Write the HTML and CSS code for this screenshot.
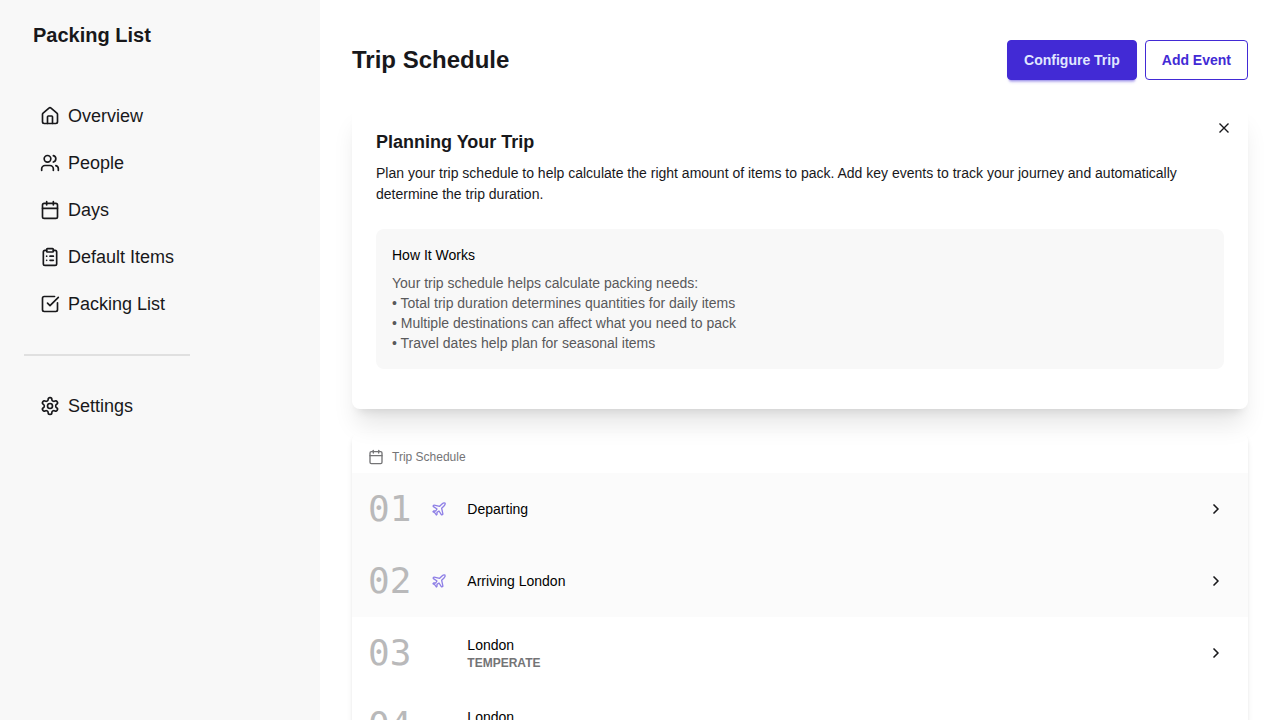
FILE: index.html
```html
<!DOCTYPE html>
<html lang="en">
<head>
<meta charset="utf-8">
<meta name="viewport" content="width=device-width, initial-scale=1">
<title>Packing List</title>
<link rel="stylesheet" href="styles.css">
</head>
<body>
<svg class="sprite" aria-hidden="true">
  <symbol id="house" viewBox="0 0 24 24"><path d="M15 21v-8a1 1 0 0 0-1-1h-4a1 1 0 0 0-1 1v8"/><path d="M3 10a2 2 0 0 1 .709-1.528l7-5.999a2 2 0 0 1 2.582 0l7 5.999A2 2 0 0 1 21 10v9a2 2 0 0 1-2 2H5a2 2 0 0 1-2-2z"/></symbol>
  <symbol id="users" viewBox="0 0 24 24"><path d="M16 21v-2a4 4 0 0 0-4-4H6a4 4 0 0 0-4 4v2"/><circle cx="9" cy="7" r="4"/><path d="M22 21v-2a4 4 0 0 0-3-3.87"/><path d="M16 3.13a4 4 0 0 1 0 7.75"/></symbol>
  <symbol id="calendar" viewBox="0 0 24 24"><path d="M8 2v4"/><path d="M16 2v4"/><rect x="3" y="4" width="18" height="18" rx="2"/><path d="M3 10h18"/></symbol>
  <symbol id="clipboard" viewBox="0 0 24 24"><rect x="8" y="2" width="8" height="4" rx="1"/><path d="M16 4h2a2 2 0 0 1 2 2v14a2 2 0 0 1-2 2H6a2 2 0 0 1-2-2V6a2 2 0 0 1 2-2h2"/><path d="M12 11h4"/><path d="M12 16h4"/><path d="M8 11h.01"/><path d="M8 16h.01"/></symbol>
  <symbol id="check" viewBox="0 0 24 24"><path d="M21 10.5V19a2 2 0 0 1-2 2H5a2 2 0 0 1-2-2V5a2 2 0 0 1 2-2h12.5"/><path d="m9 11 3 3L22 4"/></symbol>
  <symbol id="gear" viewBox="0 0 24 24"><path d="M12.22 2h-.44a2 2 0 0 0-2 2v.18a2 2 0 0 1-1 1.73l-.43.25a2 2 0 0 1-2 0l-.15-.08a2 2 0 0 0-2.73.73l-.22.38a2 2 0 0 0 .73 2.73l.15.1a2 2 0 0 1 1 1.72v.51a2 2 0 0 1-1 1.74l-.15.09a2 2 0 0 0-.73 2.73l.22.38a2 2 0 0 0 2.73.73l.15-.08a2 2 0 0 1 2 0l.43.25a2 2 0 0 1 1 1.73V20a2 2 0 0 0 2 2h.44a2 2 0 0 0 2-2v-.18a2 2 0 0 1 1-1.73l.43-.25a2 2 0 0 1 2 0l.15.08a2 2 0 0 0 2.73-.73l.22-.39a2 2 0 0 0-.73-2.73l-.15-.08a2 2 0 0 1-1-1.74v-.5a2 2 0 0 1 1-1.74l.15-.09a2 2 0 0 0 .73-2.73l-.22-.38a2 2 0 0 0-2.73-.73l-.15.08a2 2 0 0 1-2 0l-.43-.25a2 2 0 0 1-1-1.73V4a2 2 0 0 0-2-2z"/><circle cx="12" cy="12" r="3"/></symbol>
  <symbol id="plane" viewBox="0 0 24 24"><path d="M17.8 19.2 16 11l3.5-3.5C21 6 21.5 4 21 3c-1-.5-3 0-4.5 1.5L13 8 4.8 6.2c-.5-.1-.9.1-1.1.5l-.3.5c-.2.5-.1 1 .3 1.3L9 12l-2 3H4l-1 1 3 2 2 3 1-1v-3l3-2 3.5 5.3c.3.4.8.5 1.3.3l.5-.2c.4-.3.6-.7.5-1.2z"/></symbol>
  <symbol id="chevron" viewBox="0 0 24 24"><path d="m9 18 6-6-6-6"/></symbol>
  <symbol id="close" viewBox="0 0 16 16"><path d="M3.5 3.5l9 9M12.5 3.5l-9 9"/></symbol>
</svg>
<div class="layout">
  <aside class="sidebar">
    <h2 class="brand">Packing List</h2>
    <nav class="nav">
      <ul class="menu">
        <li><a class="menu-link" href="#"><svg class="icon"><use href="#house"/></svg>Overview</a></li>
        <li><a class="menu-link" href="#"><svg class="icon"><use href="#users"/></svg>People</a></li>
        <li><a class="menu-link" href="#"><svg class="icon"><use href="#calendar"/></svg>Days</a></li>
        <li><a class="menu-link" href="#"><svg class="icon"><use href="#clipboard"/></svg>Default Items</a></li>
        <li><a class="menu-link" href="#"><svg class="icon"><use href="#check"/></svg>Packing List</a></li>
      </ul>
      <hr class="divider">
      <a class="menu-link" href="#"><svg class="icon"><use href="#gear"/></svg>Settings</a>
    </nav>
  </aside>
  <main class="main">
    <header class="page-header">
      <h1 class="page-title">Trip Schedule</h1>
      <div class="actions">
        <button class="btn btn-primary" type="button">Configure Trip</button>
        <button class="btn btn-outline" type="button">Add Event</button>
      </div>
    </header>
    <section class="card intro">
      <button class="icon-btn close" type="button" aria-label="Close"><svg class="icon-sm close-icon"><use href="#close"/></svg></button>
      <h2 class="card-title">Planning Your Trip</h2>
      <p class="lead">Plan your trip schedule to help calculate the right amount of items to pack. Add key events to track your journey and automatically determine the trip duration.</p>
      <div class="info">
        <h3 class="info-title">How It Works</h3>
        <p class="info-text">Your trip schedule helps calculate packing needs:<br>• Total trip duration determines quantities for daily items<br>• Multiple destinations can affect what you need to pack<br>• Travel dates help plan for seasonal items</p>
      </div>
    </section>
    <section class="schedule">
      <h2 class="schedule-title"><svg class="icon-sm"><use href="#calendar"/></svg>Trip Schedule</h2>
      <ol class="events">
        <li class="event travel">
          <span class="number">01</span>
          <span class="kind"><svg class="icon-sm"><use href="#plane"/></svg></span>
          <div class="place">Departing</div>
          <button class="icon-btn" type="button" aria-label="Open Departing"><svg class="icon-sm chevron"><use href="#chevron"/></svg></button>
        </li>
        <li class="event travel">
          <span class="number">02</span>
          <span class="kind"><svg class="icon-sm"><use href="#plane"/></svg></span>
          <div class="place">Arriving London</div>
          <button class="icon-btn" type="button" aria-label="Open Arriving London"><svg class="icon-sm chevron"><use href="#chevron"/></svg></button>
        </li>
        <li class="event">
          <span class="number">03</span>
          <span class="kind"></span>
          <div class="place">London<div class="climate">Temperate</div></div>
          <button class="icon-btn" type="button" aria-label="Open day 3"><svg class="icon-sm chevron"><use href="#chevron"/></svg></button>
        </li>
        <li class="event">
          <span class="number">04</span>
          <span class="kind"></span>
          <div class="place">London<div class="climate">Temperate</div></div>
          <button class="icon-btn" type="button" aria-label="Open day 4"><svg class="icon-sm chevron"><use href="#chevron"/></svg></button>
        </li>
      </ol>
    </section>
  </main>
</div>
</body>
</html>
```
FILE: styles.css
```css
*, *::before, *::after { box-sizing: border-box; }

body {
  margin: 0;
  background: #fff;
  color: #18181b;
  font: 14px/20px "Liberation Sans", Helvetica, Arial, sans-serif;
}

h1, h2, h3, p, ul, ol { margin: 0; padding: 0; }
ul, ol { list-style: none; }
svg { fill: none; stroke: currentColor; stroke-width: 2; stroke-linecap: round; stroke-linejoin: round; }
.sprite { display: none; }
.icon { width: 20px; height: 20px; flex: none; }
.icon-sm { width: 16px; height: 16px; flex: none; }

.layout {
  display: grid;
  grid-template-columns: 320px 1fr;
  height: 100vh;
}

.sidebar { padding: 20px 24px; background: #f8f8f8; }
.brand { padding: 0 9px; font-size: 20px; line-height: 30px; }
.nav { width: 166px; margin-top: 44px; }
.menu { display: grid; gap: 3px; }
.menu-link {
  display: flex;
  align-items: center;
  gap: 8px;
  padding: 8px 16px;
  border-radius: 4px;
  color: inherit;
  font-size: 18px;
  line-height: 28px;
  text-decoration: none;
  white-space: nowrap;
}
.divider { height: 2px; margin: 28px 0; border: 0; background: #e0e0e0; }

.main {
  min-width: 0;
  padding: 40px 32px;
  overflow: auto;
  scrollbar-width: none;
}
.page-header {
  display: flex;
  align-items: center;
  justify-content: space-between;
  margin-bottom: 24px;
}
.page-title { font-size: 24px; line-height: 32px; }
.actions { display: flex; gap: 8px; }
.btn {
  height: 40px;
  padding: 0 16px;
  border: 1px solid #422ad5;
  border-radius: 4px;
  font: bold 14px/20px "Liberation Sans", Helvetica, Arial, sans-serif;
}
.btn-primary {
  background: #422ad5;
  color: #e0e7ff;
  box-shadow: 0 3px 2px -2px rgba(66, 42, 213, .3), 0 4px 3px -2px rgba(66, 42, 213, .3);
}
.btn-outline { background: transparent; color: #422ad5; }

.card {
  position: relative;
  margin-bottom: 24px;
  padding: 24px 24px 40px;
  border-radius: 8px;
  box-shadow: 0 20px 25px -5px rgba(0, 0, 0, .1), 0 8px 10px -6px rgba(0, 0, 0, .1);
}
.card-title { margin-bottom: 7px; font-size: 18px; line-height: 28px; }
.lead { margin-bottom: 24px; line-height: 21px; }
.icon-btn {
  display: grid;
  place-items: center;
  width: 32px;
  height: 32px;
  padding: 0;
  border: 0;
  border-radius: 4px;
  background: transparent;
  color: inherit;
}
.close { position: absolute; top: 8px; right: 8px; border-radius: 50%; }
.close-icon { stroke-width: 1.4; stroke-linecap: butt; }
.chevron { stroke-width: 2.5; }

.info { padding: 16px; border-radius: 8px; background: #f8f8f8; }
.info-title { margin-bottom: 8px; color: #000; font-size: 14px; font-weight: normal; line-height: 20px; }
.info-text { color: #59595b; }

.schedule { border-radius: 8px; box-shadow: 0 4px 6px -1px rgba(0, 0, 0, .1), 0 2px 4px -2px rgba(0, 0, 0, .1); }
.schedule-title {
  display: flex;
  align-items: center;
  gap: 8px;
  padding: 16px 16px 8px;
  color: #747476;
  font-size: 12px;
  font-weight: normal;
  line-height: 16px;
}
.event {
  display: grid;
  grid-template-columns: auto 24px 1fr auto;
  align-items: center;
  gap: 16px;
  padding: 16px;
}
.travel { background: #fbfbfb; }
.number { color: #b9b9ba; font: 36px/40px "DejaVu Sans Mono", monospace; }
.kind { display: grid; place-items: center; color: #8e7fe6; }
.place { color: #000; }
.climate { color: #747476; font-size: 12px; font-weight: bold; line-height: 16px; text-transform: uppercase; }
```
